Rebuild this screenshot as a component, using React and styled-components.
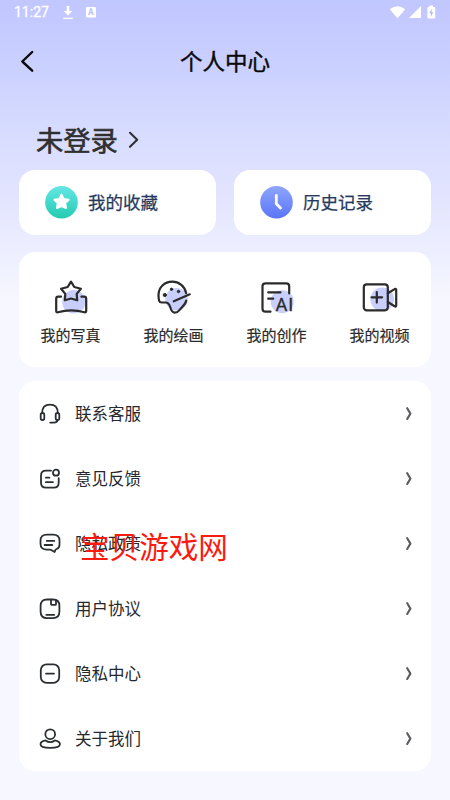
import React from 'react'
import styled, { createGlobalStyle } from 'styled-components'

const GlobalStyle = createGlobalStyle`
    * {
        box-sizing: border-box;
    }
    body {
        margin: 0;
        font-family: "Noto Sans CJK SC", sans-serif;
    }
    svg {
        display: block;
        flex-shrink: 0;
    }
`

const Page = styled.div`
    position: relative;
    width: 450px;
    height: 800px;
    overflow: hidden;
    padding: 0 19px;
    background: linear-gradient(180deg, #c1c7ff 0px, #c9cfff 60px, #d4d9ff 115px, #e3e5ff 200px, #f6f7ff 300px);
`
const StatusBar = styled.div`
    display: flex;
    justify-content: space-between;
    align-items: center;
    height: 25px;
    margin: 0 -7px 0 -5px;
`
const StatusGroup = styled.div`
    display: flex;
    align-items: center;
    gap: ${props => props.$gap}px;
`
const Time = styled.span`
    font-family: Roboto, sans-serif;
    font-size: 14px;
    font-weight: 400;
    line-height: 25px;
    color: #fff;
    width: 36px;
    -webkit-text-stroke: 0.3px #fff;
`
const Header = styled.div`
    position: relative;
    height: 74px;
    display: flex;
    justify-content: center;
    padding-top: 19px;
`
const BackButton = styled.div`
    position: absolute;
    left: 0;
    top: 25px;
`
const Title = styled.h1`
    margin: 0;
    font-size: 22.5px;
    line-height: 32px;
    font-weight: 400;
    color: #0a0a0a;
    -webkit-text-stroke: 0.4px #0a0a0a;
`
const Account = styled.div`
    display: flex;
    align-items: center;
    height: 71px;
    padding: 11px 0 0 17px;
    gap: 10px;
`
const AccountName = styled.span`
    font-size: 27.3px;
    line-height: 40px;
    margin-top: -2px;
    color: #303030;
    -webkit-text-stroke: 0.6px #303030;
`
const Shortcuts = styled.div`
    display: grid;
    grid-template-columns: 1fr 1fr;
    gap: 18px;
    margin-bottom: 17px;
`
const Shortcut = styled.div`
    display: flex;
    align-items: center;
    height: 65px;
    padding-left: 26px;
    gap: 10px;
    border-radius: 16px;
    background: #fff;
`
const ShortcutLabel = styled.span`
    margin-top: -2px;
    font-size: 17.5px;
    line-height: 26px;
    color: #263a5e;
    -webkit-text-stroke: 0.25px #263a5e;
`
const Tiles = styled.div`
    display: grid;
    grid-template-columns: repeat(4, 1fr);
    height: 115px;
    margin-bottom: 14px;
    border-radius: 16px;
    background: #fff;
`
const Tile = styled.div`
    display: flex;
    flex-direction: column;
    align-items: center;
    padding-top: 28px;
    gap: 8px;
`
const TileLabel = styled.span`
    font-size: 15px;
    line-height: 22px;
    color: #2a2a2a;
    -webkit-text-stroke: 0.2px #2a2a2a;
`
const Menu = styled.div`
    border-radius: 16px;
    background: #fff;
`
const MenuRow = styled.div`
    display: flex;
    align-items: center;
    height: 65px;
    padding: 0 17px 0 19px;
`
const MenuLabel = styled.span`
    flex: 1;
    margin-top: -2px;
    padding-left: 13px;
    font-size: 16.5px;
    line-height: 24px;
    color: #25282c;
`
const Watermark = styled.div`
    position: absolute;
    left: 80px;
    top: 524px;
    font-size: 29.6px;
    line-height: 44px;
    color: #fb1a10;
    white-space: nowrap;
`
const LineIcon = styled.svg`
    fill: none;
    stroke: ${props => props.$color || '#2b2f33'};
    stroke-width: ${props => props.$weight || 1.8};
    stroke-linecap: round;
    stroke-linejoin: round;
    overflow: visible;
`
const Blob = styled.circle`
    fill: #c9cffd;
    stroke: none;
`
const IconText = styled.text`
    font-family: Roboto, sans-serif;
    font-size: ${props => props.$size}px;
    font-weight: ${props => props.$bold ? 700 : 400};
    letter-spacing: 0.8px;
    fill: ${props => props.$color};
    stroke: ${props => props.$bold ? 'none' : props.$color};
    stroke-width: 0.3;
`

const StarBadge = () => (
    <svg width="33" height="33" viewBox="0 0 33 33">
        <defs>
            <linearGradient id="teal" x1="0" y1="0" x2="0" y2="1">
                <stop offset="0" stopColor="#66e6e6" />
                <stop offset="1" stopColor="#22cbb0" />
            </linearGradient>
        </defs>
        <circle cx="16.5" cy="16.3" r="16.3" fill="url(#teal)" />
        <path d="M16.5 8.6l2.3 4.3 4.8.8-3.4 3.4.8 4.9-4.5-2-4.5 2 .8-4.9-3.4-3.4 4.8-.8z" fill="#fff" stroke="#fff" strokeWidth="2" strokeLinejoin="round" />
    </svg>
)

const ClockBadge = () => (
    <svg width="33" height="33" viewBox="0 0 33 33">
        <defs>
            <linearGradient id="blue" x1="0" y1="0" x2="0" y2="1">
                <stop offset="0" stopColor="#8ea6fd" />
                <stop offset="1" stopColor="#5a74f8" />
            </linearGradient>
        </defs>
        <circle cx="16.5" cy="16.3" r="16.3" fill="url(#blue)" />
        <path d="M16.3 9.5v8.2l4.2 4.3" fill="none" stroke="#fff" strokeWidth="2.8" strokeLinecap="round" strokeLinejoin="round" />
    </svg>
)

const tiles = [
    {
        label: '我的写真',
        icon: <>
            <Blob cx="20.8" cy="21.7" r="11.7" />
            <path d="M8 16.7H5.2q-2 0-2 2V31q0 1.6 1.7 1.2 13.3-3.8 26.6 0 1.7.4 1.7-1.2V18.7q0-2-2-2h-2.8" />
            <path d="M18 1.6l3.3 5.4 6.6 1.7-4.2 5.2.5 6.4-6.2-1.8-6.2 1.8.5-6.4-4.2-5.2 6.6-1.7z" />
        </>
    },
    {
        label: '我的绘画',
        icon: <>
            <Blob cx="20.5" cy="19.3" r="11.3" />
            <path d="M30.2 13.2C28.8 6.2 23.2 1.7 16.2 1.7 8.5 1.7 2.5 7.5 2.5 15c0 2 .2 4.3.7 6 .4 1.3 1.3 1.5 2.6 1.5h3.7c3 0 3.8 1.5 4.7 4.5 1 3.5 2 5.7 4.6 5.7 2 0 3.3-1 4.6-2.6 3-3.5 6-5.5 6.8-9.4" />
            <path d="M17.8 21.3l16-7" />
            <circle cx="8.8" cy="15" r="1.6" fill="#2b2b2b" strokeWidth="1" />
            <circle cx="15.5" cy="9.3" r="1.2" fill="#2b2b2b" strokeWidth="1" />
            <circle cx="22.5" cy="11.5" r="1.2" fill="#2b2b2b" strokeWidth="1" />
        </>
    },
    {
        label: '我的创作',
        icon: <>
            <Blob cx="23.2" cy="21.7" r="11.5" />
            <path d="M11.5 31.7h-5q-3 0-3-3V6.3q0-3 3-3h20.7q3 0 3 3v7.2" />
            <path d="M9.2 12.3h12.3M9.2 18.7h5" />
            <IconText x="16.6" y="30.5" $size={18.3} $color="#2b2b2b">AI</IconText>
        </>
    },
    {
        label: '我的视频',
        icon: <>
            <Blob cx="20.2" cy="19.3" r="11.8" />
            <rect x="1.8" y="4.3" width="24" height="26" rx="3" />
            <path d="M25.8 13.3l6.8-4.2q1.6-.8 1.6 1v15.2q0 1.8-1.6 1l-6.8-4.3" />
            <path d="M14.8 12v10.6M9.5 17.3h10.6" />
        </>
    }
]

const menu = [
    {
        label: '联系客服',
        icon: <>
            <path d="M4.2 11C4.2 5.6 7.2 2.7 12 2.7s7.8 2.900 7.800 8.300" />
            <rect x="2.7" y="11" width="3.6" height="7" rx="1.8" />
            <rect x="17.7" y="11" width="3.6" height="7" rx="1.8" />
            <path d="M19.5 18q-.5 2.6-3.5 2.6h-3.800" />
        </>
    },
    {
        label: '意见反馈',
        icon: <>
            <path d="M13 3.700H8q-5 0-5 5v7q0 5 5 5h7.700q5 0 5-5v-4.500" />
            <circle cx="18" cy="5.7" r="3" />
            <path d="M7.900 10.700h3.500M7.900 15.200h7" />
        </>
    },
    {
        label: '隐私政策',
        icon: <>
            <path d="M9 2.600h6q6.500 0 6.500 6v4.100q0 3.300-3 4.300-.9.300-1.200 1.200l-.7 1.800-2.900-1.800q-.8-.5-1.700-.5H9q-6.500 0-6.500-6v-3Q2.500 2.600 9 2.600z" />
            <path d="M8.8 8.900h7.500M6.600 13h7.700" />
        </>
    },
    {
        label: '用户协议',
        icon: <>
            <path d="M9 2.500h6q6.400 0 6.400 6.300v6q0 6.300-6.400 6.300H9q-6.400 0-6.400-6.300v-6Q2.600 2.500 9 2.500z" />
            <path d="M13 2.600v4.300q0 1 1 1h3q1 0 1-1V3.400M8.300 17.800h8" />
        </>
    },
    {
        label: '隐私中心',
        icon: <>
            <rect x="2.8" y="2.3" width="18.4" height="18.6" rx="5.8" />
            <path d="M8 11.600h8" />
        </>
    },
    {
        label: '关于我们',
        icon: <>
            <circle cx="12.2" cy="7.2" r="4.900" />
            <path d="M7.500 13.400c-3.200.6-5 1.800-5 3.800 0 2.800 3.200 3.600 9.700 3.600s9.700-.8 9.700-3.600c0-2-1.800-3.200-5-3.800-2.700 1.900-6.700 1.900-9.400 0z" />
        </>
    }
]

function App() {
    return (
        <Page>
            <GlobalStyle />
            <StatusBar>
                <StatusGroup $gap={12}>
                    <Time>11:27</Time>
                    <svg width="12" height="14" viewBox="0 0 12 14">
                        <path d="M4.700 0h2.600v5h3L6 9.500 1.700 5h3zM1.200 11.700h9.600v1.400H1.200z" fill="#fff" />
                    </svg>
                    <svg width="10" height="11" viewBox="0 0 10 11">
                        <rect width="10" height="10.5" rx="1.2" fill="#fff" />
                        <IconText x="2.1" y="8.3" $size={8.5} $color="#bcc1f5" $bold>A</IconText>
                    </svg>
                </StatusGroup>
                <StatusGroup $gap={3}>
                    <svg width="17" height="13" viewBox="0 0 17 13">
                        <path d="M.8 3.300Q8.500-2.600 16.200 3.300L8.500 12.200z" fill="#fff" />
                    </svg>
                    <svg width="12" height="13" viewBox="0 0 12 13">
                        <path d="M12 0v12H0z" fill="#fff" />
                    </svg>
                    <svg width="14" height="15" viewBox="0 0 14 15">
                        <path d="M5.500 2V.5h3.500V2h1.300q.9 0 .9.900v9.700q0 .9-.9.900H4.300q-.9 0-.9-.9V2.900q0-.9.900-.9z" fill="#fff" />
                        <path d="M7.700 4L5.300 8.300h1.500v3.400L9.300 7.300H7.700z" fill="#b3b9ed" />
                    </svg>
                </StatusGroup>
            </StatusBar>

            <Header>
                <BackButton>
                    <LineIcon width="16" height="24" viewBox="0 0 16 24" $color="#0a0a0a" $weight={2.4}>
                        <path d="M13.200 2L3.300 11.500l9.900 9.200" />
                    </LineIcon>
                </BackButton>
                <Title>个人中心</Title>
            </Header>

            <Account>
                <AccountName>未登录</AccountName>
                <LineIcon width="12" height="18" viewBox="0 0 12 18" $color="#303030" $weight={2.1}>
                    <path d="M2 1.800l7.200 6.900L2 15.800" />
                </LineIcon>
            </Account>

            <Shortcuts>
                <Shortcut><StarBadge /><ShortcutLabel>我的收藏</ShortcutLabel></Shortcut>
                <Shortcut><ClockBadge /><ShortcutLabel>历史记录</ShortcutLabel></Shortcut>
            </Shortcuts>

            <Tiles>
                {tiles.map(tile => (
                    <Tile key={tile.label}>
                        <LineIcon width="36" height="36" viewBox="0 0 36 36" $color="#2b2b2b" $weight={2.2}>{tile.icon}</LineIcon>
                        <TileLabel>{tile.label}</TileLabel>
                    </Tile>
                ))}
            </Tiles>

            <Menu>
                {menu.map(item => (
                    <MenuRow key={item.label}>
                        <LineIcon width="24" height="24" viewBox="0 0 24 24">{item.icon}</LineIcon>
                        <MenuLabel>{item.label}</MenuLabel>
                        <LineIcon width="10" height="16" viewBox="0 0 10 16" $color="#5c5c60" $weight={2.1}>
                            <path d="M3.200 2.200l3.200 5.400-3.200 5.400" />
                        </LineIcon>
                    </MenuRow>
                ))}
            </Menu>

            <Watermark>宝贝游戏网</Watermark>
        </Page>
    )
}

export default App
